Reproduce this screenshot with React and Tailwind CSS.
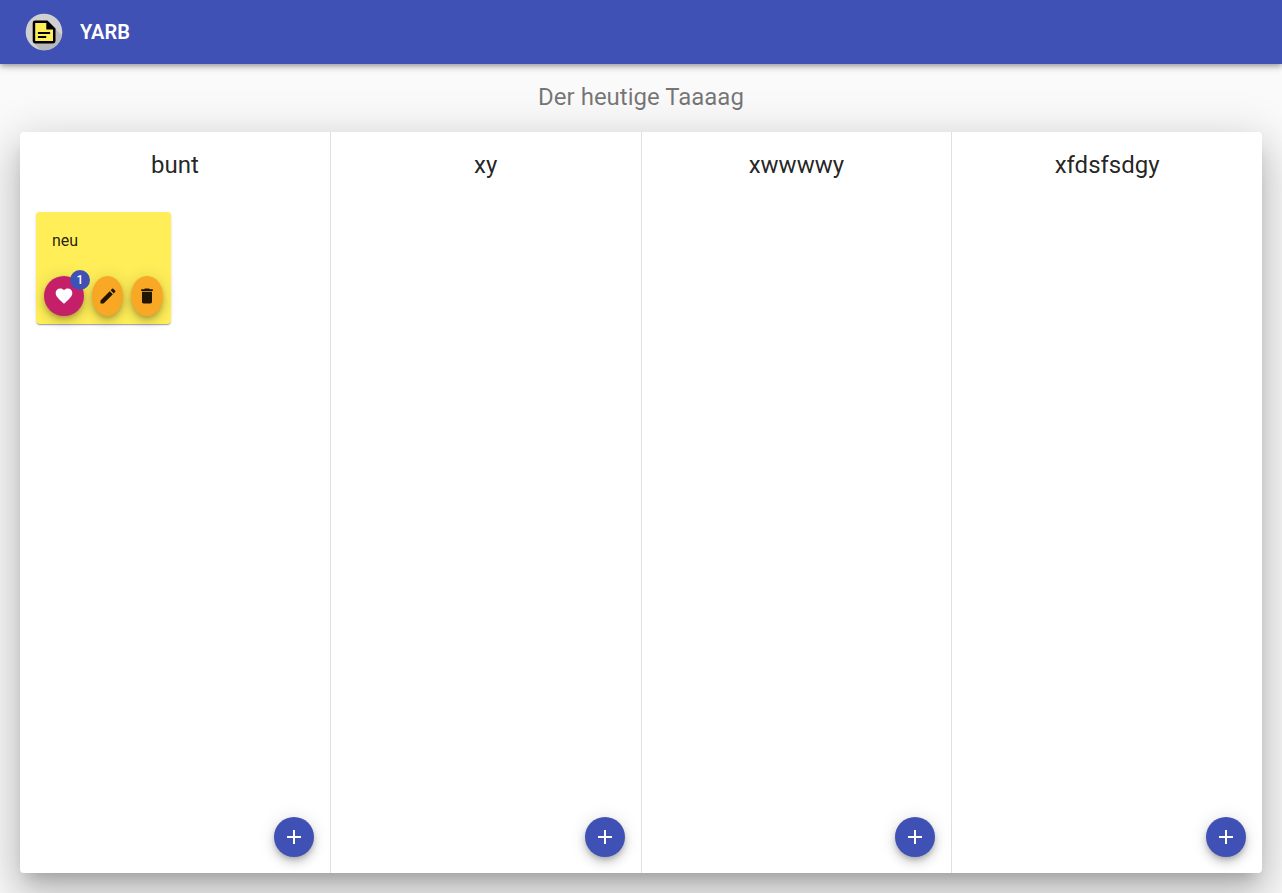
import { MdAdd, MdDelete, MdEdit, MdFavorite } from "react-icons/md";

const columns = [
  { id: 1, title: "bunt", notes: [{ id: 1, text: "neu", likes: 1 }] },
  { id: 2, title: "xy", notes: [] },
  { id: 3, title: "xwwwwy", notes: [] },
  { id: 4, title: "xfdsfsdgy", notes: [] },
];

const fab =
  "flex h-10 cursor-pointer items-center justify-center rounded-[50%] shadow-[0_3px_5px_-1px_rgba(0,0,0,0.2),0_6px_10px_0_rgba(0,0,0,0.14),0_1px_18px_0_rgba(0,0,0,0.12)]";

function Logo() {
  return (
    <svg viewBox="0 0 40 40" className="size-10" aria-hidden="true">
      <defs>
        <clipPath id="logo-disc">
          <circle cx="20" cy="20" r="18.3" />
        </clipPath>
      </defs>
      <circle cx="20" cy="20" r="18.3" fill="#d0d0d0" />
      <path d="M31 16.5 L46 31.5 V46 H24.5 L9.5 31 Z" fill="#b8b8b8" clipPath="url(#logo-disc)" />
      <path
        d="M11.1 8.5 H23.5 L31.5 16.5 V29 A2.4 2.4 0 0 1 29.1 31.4 H11.1 A2.4 2.4 0 0 1 8.7 29 V10.9 A2.4 2.4 0 0 1 11.1 8.5 Z"
        fill="#000"
      />
      <path d="M11.2 11 H22.3 V17.6 H29 V28.9 H11.2 Z" fill="#ffee58" />
      <path d="M13.9 19.9 H26.1 V22.1 H13.9 Z M13.9 23.9 H22.2 V26.1 H13.9 Z" fill="#000" />
    </svg>
  );
}

function Note({ note }) {
  return (
    <article className="rounded bg-[#ffee58] shadow-[0_2px_1px_-1px_rgba(0,0,0,0.2),0_1px_1px_0_rgba(0,0,0,0.14),0_1px_3px_0_rgba(0,0,0,0.12)]">
      <p className="px-4 pt-4 pb-3.5 text-base/[26px] text-black/87">{note.text}</p>
      <div className="flex gap-2 p-2">
        <div className="relative w-10 shrink-0">
          <button type="button" aria-label="Like" className={`${fab} w-10 bg-[#c51f6a] text-white`}>
            <MdFavorite className="size-5" />
          </button>
          <span className="absolute -top-1.5 -right-1.5 flex size-5 items-center justify-center rounded-full bg-[#3f51b5] text-xs font-medium text-white">
            {note.likes}
          </span>
        </div>
        <button type="button" aria-label="Edit" className={`${fab} min-w-0 flex-1 bg-[#f9a825] text-black/87`}>
          <MdEdit className="size-5 shrink-0" />
        </button>
        <button type="button" aria-label="Delete" className={`${fab} min-w-0 flex-1 bg-[#f9a825] text-black/87`}>
          <MdDelete className="size-5 shrink-0" />
        </button>
      </div>
    </article>
  );
}

function Column({ column }) {
  return (
    <section className="flex min-w-0 flex-1 flex-col border-r border-black/12 p-4 last:border-r-0">
      <h2 className="text-center text-2xl/[34px] text-black/87">{column.title}</h2>
      <div className="mt-[30px] grid grid-cols-2 gap-2">
        {column.notes.map((note) => (
          <Note key={note.id} note={note} />
        ))}
      </div>
      <button type="button" aria-label="Add note" className={`${fab} mt-auto w-10 self-end bg-[#3f51b5] text-white`}>
        <MdAdd className="size-6" />
      </button>
    </section>
  );
}

export default function App() {
  return (
    <div className="flex min-h-screen flex-col overflow-hidden bg-[#fafafa] font-[Roboto,sans-serif]">
      <header className="z-10 flex h-16 shrink-0 items-center gap-4 bg-[#3f51b5] px-6 text-white shadow-[0_2px_4px_-1px_rgba(0,0,0,0.2),0_4px_5px_0_rgba(0,0,0,0.14),0_1px_10px_0_rgba(0,0,0,0.12)]">
        <Logo />
        <span className="text-xl font-semibold">YARB</span>
      </header>
      <main className="flex flex-1 flex-col px-5 pt-4 pb-5">
        <h1 className="text-center text-2xl/[34px] text-black/54">Der heutige Taaaag</h1>
        <div className="mt-[18px] flex flex-1 rounded bg-white shadow-[0_11px_15px_-7px_rgba(0,0,0,0.2),0_24px_38px_3px_rgba(0,0,0,0.14),0_9px_46px_8px_rgba(0,0,0,0.12)]">
          {columns.map((column) => (
            <Column key={column.id} column={column} />
          ))}
        </div>
      </main>
    </div>
  );
}
